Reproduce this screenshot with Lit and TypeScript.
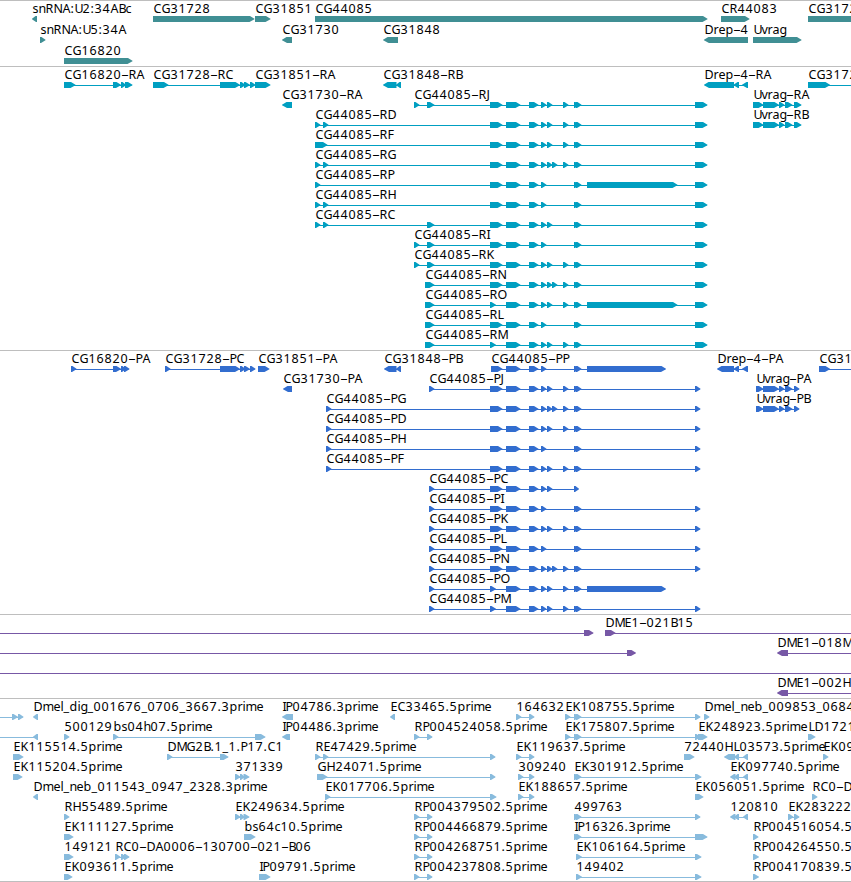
import { LitElement, css, html, svg } from "lit";
import { customElement, property } from "lit/decorators.js";

type Span = [start: number, end: number];

interface Feature {
  row: number;
  label?: string;
  spans: Span[];
  reverse?: boolean;
  // intron line limits, when it runs past the spans
  from?: number;
  to?: number;
}

interface Track {
  name: string;
  height: number;
  pitch: number;
  features: Feature[];
}

const WIDTH = 851;

const ADVANCE: Record<string, number> = {
  A: 8, B: 7, C: 8, D: 9, E: 7, F: 7, G: 9, H: 9, I: 3, J: 4, K: 8, L: 6, M: 10,
  N: 9, O: 9, P: 7, R: 8, U: 8, a: 7, b: 8, c: 6, d: 8, e: 7, g: 7, h: 7, i: 3,
  l: 3, m: 11, n: 7, p: 8, r: 5, s: 6, v: 6, ".": 4, ":": 4, "-": 7, _: 6,
};

const f = (row: number, label: string, ...spans: Span[]): Feature => ({ row, label, spans });
const rev = (row: number, label: string, ...spans: Span[]): Feature => ({
  row,
  label,
  spans,
  reverse: true,
});

// exons shared by the CG44085 isoforms
const EXONS: Record<string, Span[]> = {
  A: [[490, 502.5]],
  a: [[490, 496]],
  B: [[506, 520.5]],
  C: [[529, 538.5]],
  D: [[541, 546.5]],
  E: [[547, 552.5]],
  e: [[552, 557.5]],
  F: [[563, 568.5]],
  G: [[574, 579], [576, 581.5]],
  g: [[574, 579]],
  X: [[587, 677.5]],
  x: [[587, 666]],
  H: [[695, 707.5]],
  h: [[695, 700.5]],
};

const iso = (row: number, suffix: string, first: Span[], exons: string): Feature => ({
  row,
  label: `CG44085-${suffix}`,
  spans: [...first, ...[...exons].flatMap((key) => EXONS[key])],
});

const s315: Span = [315, 320.5];
const s323: Span = [323, 328.5];
const s414: Span = [414, 419.5];
const s427: Span = [427, 434.5];
const s425: Span = [425, 434.5];
const s326: Span = [326, 331.5];
const s429: Span = [429, 434.5];

const TRACKS: Track[] = [
  {
    name: "gene",
    height: 66,
    pitch: 21,
    features: [
      rev(0, "snRNA:U2:34ABc", [32, 37]),
      f(0, "CG31728", [153, 254.5]),
      f(0, "CG31851", [255, 270.5]),
      f(0, "CG44085", [315, 707.5]),
      f(0, "CR44083", [721, 749.5]),
      f(0, "CG3172", [808, 900]),
      f(1, "snRNA:U5:34A", [40, 45.5]),
      rev(1, "CG31730", [282, 292]),
      rev(1, "CG31848", [383, 398]),
      rev(1, "Drep-4", [704, 748]),
      f(1, "Uvrag", [753, 801.5]),
      f(2, "CG16820", [64, 132.5]),
    ],
  },
  {
    name: "transcript",
    height: 284,
    pitch: 20,
    features: [
      f(0, "CG16820-RA", [64, 75.5], [113, 121], [121, 126], [125, 132.5]),
      f(0, "CG31728-RC", [153, 168.5], [220, 240], [240, 245.5], [244, 250], [250, 255.5]),
      f(0, "CG31851-RA", [255, 270.5]),
      rev(0, "CG31848-RB", [383, 396.5], [396, 401]),
      rev(0, "Drep-4-RA", [704, 734], [733.5, 739], [742, 748]),
      f(0, "CG3172", [808, 830], [900, 910]),
      rev(1, "CG31730-RA", [282, 292]),
      iso(1, "RJ", [s414, s427], "ABCDEFGH"),
      f(1, "Uvrag-RA", [753, 763.5], [763, 779], [779, 784.5], [785, 792.5], [794, 801.5]),
      iso(2, "RD", [s315, s323], "ABCDEFGH"),
      f(2, "Uvrag-RB", [753, 763.5], [763, 779], [779, 784.5], [785, 792.5], [794, 801.5]),
      iso(3, "RF", [[315, 327.5]], "ABCDEFGH"),
      iso(4, "RG", [s315, s323], "ABCDEeFGH"),
      iso(5, "RP", [s315], "ABCDGXH"),
      iso(6, "RH", [s315, s323], "ABCDGH"),
      iso(7, "RC", [s315, s323, s427], "ABCDEGH"),
      iso(8, "RI", [s414, s427], "ABCDGH"),
      iso(9, "RK", [s414, s427], "ABCDEFGH"),
      iso(10, "RN", [s425], "ABCDEeFGH"),
      iso(11, "RO", [s425], "aBCDEFGXH"),
      iso(12, "RL", [s425], "ABCDGH"),
      iso(13, "RM", [s425], "aBCDEFGH"),
    ],
  },
  {
    name: "protein",
    height: 264,
    pitch: 20,
    features: [
      f(0, "CG16820-PA", [71, 76.5], [113, 121], [121, 126], [124, 129.5]),
      f(0, "CG31728-PC", [165, 170.5], [220, 240], [240, 245.5], [244, 250], [250, 255.5]),
      f(0, "CG31851-PA", [258, 269.5]),
      rev(0, "CG31848-PB", [384, 396.5], [396, 401]),
      iso(0, "PP", [[491, 502.5]], "BCDGx"),
      rev(0, "Drep-4-PA", [717, 734], [733.5, 739], [742, 748]),
      f(0, "CG31", [819, 830], [900, 910]),
      rev(1, "CG31730-PA", [283, 292]),
      iso(1, "PJ", [s429], "ABCDEFGh"),
      f(1, "Uvrag-PA", [756, 763.5], [763, 779], [779, 784.5], [785, 792.5], [794, 799.5]),
      iso(2, "PG", [s326], "ABCDEeFGh"),
      f(2, "Uvrag-PB", [756, 763.5], [763, 779], [779, 784.5], [785, 792.5], [794, 799.5]),
      iso(3, "PD", [s326], "ABCDEFGh"),
      iso(4, "PH", [s326], "ABCDGh"),
      iso(5, "PF", [s326], "ABCDEFGh"),
      iso(6, "PC", [s429], "ABCDEg"),
      iso(7, "PI", [s429], "ABCDGh"),
      iso(8, "PK", [s429], "ABCDEFGh"),
      iso(9, "PL", [s429], "ABCDGh"),
      iso(10, "PN", [s429], "ABCDEeFGh"),
      iso(11, "PO", [s429], "aBCDEFGx"),
      iso(12, "PM", [s429], "aBCDEFGh"),
    ],
  },
  {
    name: "clone",
    height: 84,
    pitch: 20,
    features: [
      { row: 0, spans: [[584, 593.5]], from: -1 },
      { row: 0, label: "DME1-021B15", spans: [[605, 615.5]], to: WIDTH + 1 },
      { row: 1, spans: [[627, 636]], from: -1 },
      { row: 1, label: "DME1-018M", spans: [[777, 788]], reverse: true, to: WIDTH + 1 },
      { row: 2, spans: [], from: -1, to: WIDTH + 1 },
      { row: 3, label: "DME1-002H", spans: [[777, 788]], reverse: true, to: WIDTH + 1 },
    ],
  },
  {
    name: "est",
    height: 183,
    pitch: 20,
    features: [
      { row: 0, spans: [[12, 18], [18, 23.5]], from: -1 },
      rev(0, "Dmel_dig_001676_0706_3667.3prime", [33, 38]),
      rev(0, "IP04786.3prime", [282, 293]),
      rev(0, "EC33465.5prime", [390, 395]),
      f(0, "164632", [516, 521.5], [529, 534.5]),
      f(0, "EK108755.5prime", [565, 570.5], [574, 579], [576, 581.5], [695, 700.5]),
      f(0, "Dmel_neb_009853_0684", [704, 709.5]),
      { row: 1, spans: [[33, 38]], reverse: true, from: -1 },
      f(1, "500129", [64, 69.5]),
      f(1, "bs04h07.5prime", [113, 118.5], [255, 265.5]),
      rev(1, "IP04486.3prime", [282, 290]),
      f(1, "RP004524058.5prime", [414, 419.5], [427, 432.5]),
      f(1, "EK175807.5prime", [565, 570.5], [574, 579], [576, 581.5], [695, 700.5]),
      f(1, "EK248923.5prime", [698, 707.5]),
      f(1, "LD1721", [808, 815.5]),
      f(2, "EK115514.5prime", [13, 23.5]),
      f(2, "DMG2B.1_1.P17.C1", [167, 172.5], [220, 228.5]),
      f(2, "RE47429.5prime", [315, 320.5], [323, 328.5], [490, 495.5]),
      f(2, "EK119637.5prime", [516, 521.5], [529, 534.5]),
      f(2, "72440", [684, 694.5]),
      rev(2, "HL03573.5prime", [724, 735], [734, 739], [743, 748]),
      f(2, "EK09", [823, 828.5]),
      f(3, "EK115204.5prime", [13, 22.5]),
      f(3, "371339", [235, 240.5], [240, 244.5], [243.5, 249.5]),
      f(3, "GH24071.5prime", [317, 327.5], [490, 495.5]),
      f(3, "309240", [518, 523.5], [529, 534.5]),
      f(3, "EK301912.5prime", [574, 579], [576, 581.5], [695, 701.5]),
      rev(3, "EK097740.5prime", [730, 735.5], [734, 739], [743, 748]),
      rev(4, "Dmel_neb_011543_0947_2328.3prime", [33, 38]),
      f(4, "EK017706.5prime", [325, 330.5], [490, 496.5]),
      f(4, "EK188657.5prime", [518, 523.5], [529, 534.5]),
      f(4, "EK056051.5prime", [695, 703.5]),
      f(4, "RC0-D", [812, 817.5]),
      f(5, "RH55489.5prime", [64, 69.5]),
      f(5, "EK249634.5prime", [235, 240.5], [240, 244.5], [243.5, 249.5]),
      f(5, "RP004379502.5prime", [414, 419.5], [427, 432.5]),
      f(5, "499763", [574, 579], [576, 581.5], [695, 700.5]),
      rev(5, "120810", [730, 735.5], [734, 739], [743, 748]),
      f(5, "EK283222", [788, 793.5], [794, 799.5]),
      f(6, "EK111127.5prime", [64, 73.5]),
      f(6, "bs64c10.5prime", [244, 255.5]),
      f(6, "RP004466879.5prime", [414, 419.5], [427, 432.5]),
      f(6, "IP16326.3prime", [574, 579], [576, 581.5], [695, 707.5]),
      f(6, "RP004516054.5", [753, 758.5]),
      f(7, "149121", [64, 73.5]),
      f(7, "RC0-DA0006-130700-021-B06", [115, 120.5], [121, 126], [124, 129.5]),
      f(7, "RP004268751.5prime", [414, 419.5], [427, 432.5]),
      f(7, "EK106164.5prime", [576, 582], [695, 701.5]),
      f(7, "RP004264550.5", [753, 759]),
      f(8, "EK093611.5prime", [64, 72.5]),
      f(8, "IP09791.5prime", [259, 270.5]),
      f(8, "RP004237808.5prime", [414, 419.5], [427, 432.5]),
      f(8, "149402", [576, 582], [695, 701.5]),
      f(8, "RP004170839.5", [753, 759]),
    ],
  },
];

// hyphens are stretched to fill their cell, everything else sits at its start
function glyphs(label: string, x: number) {
  return label.split(/(-)/).map((part) => {
    const starts: number[] = [];
    for (const ch of part) {
      starts.push(x);
      x += ADVANCE[ch] ?? 8;
    }
    return part === "-"
      ? svg`<tspan x=${starts[0] - 0.5} textLength="8" lengthAdjust="spacingAndGlyphs">-</tspan>`
      : svg`<tspan x=${starts.join(" ")}>${part}</tspan>`;
  });
}

function arrow([start, end]: Span, y: number, reverse = false) {
  const dir = reverse ? -1 : 1;
  const [tail, tip] = reverse ? [end, start] : [start, end];
  const head = Math.min(end - start, 6);
  const neck = tip - dir * head;
  return [
    [tail, y],
    [neck + dir * 1.5, y],
    [tip, y + 2.7],
    [tip, y + 3.3],
    [neck + dir, y + 6],
    [tail, y + 6],
  ].join(" ");
}

@customElement("genome-track")
export class GenomeTrack extends LitElement {
  @property({ attribute: false }) track!: Track;

  protected render() {
    const { name, height, features } = this.track;
    return html`
      <svg class=${name} width=${WIDTH} height=${height - 1}>
        ${features.map((feature) => this.feature(feature))}
      </svg>
    `;
  }

  private feature({ row, label, spans, reverse, from, to }: Feature) {
    const y = 15 + row * this.track.pitch;
    const start = from ?? spans[0][0];
    const end = to ?? spans[spans.length - 1][1];
    const intron = spans.length !== 1 || from !== undefined || to !== undefined;
    return svg`
      ${intron ? svg`<rect x=${start + 1} y=${y + 3} width=${end - start - 2} height="1" />` : ""}
      ${spans.map((span) => svg`<polygon points=${arrow(span, y, reverse)} />`)}
      ${label ? svg`<text y=${y - 3}>${glyphs(label, start + 0.5)}</text>` : ""}
    `;
  }

  static styles = css`
    :host {
      display: block;
      border-top: 1px solid #bebebe;
    }
    svg {
      display: block;
      overflow: hidden;
    }
    text {
      font: 12.5px "Noto Sans", sans-serif;
      fill: #000;
    }
    .gene {
      fill: #408f94;
    }
    .transcript {
      fill: #009fc1;
    }
    .protein {
      fill: #326dcf;
    }
    .clone {
      fill: #7758a6;
    }
    .est {
      fill: #88bbdd;
    }
  `;
}

@customElement("app-root")
export class AppRoot extends LitElement {
  protected render() {
    return TRACKS.map((track) => html`<genome-track .track=${track}></genome-track>`);
  }

  static styles = css`
    :host {
      display: block;
      inline-size: 851px;
      block-size: 882px;
      box-sizing: border-box;
      overflow: hidden;
      background: #fff;
      border-bottom: 1px solid #bebebe;
    }
  `;
}
